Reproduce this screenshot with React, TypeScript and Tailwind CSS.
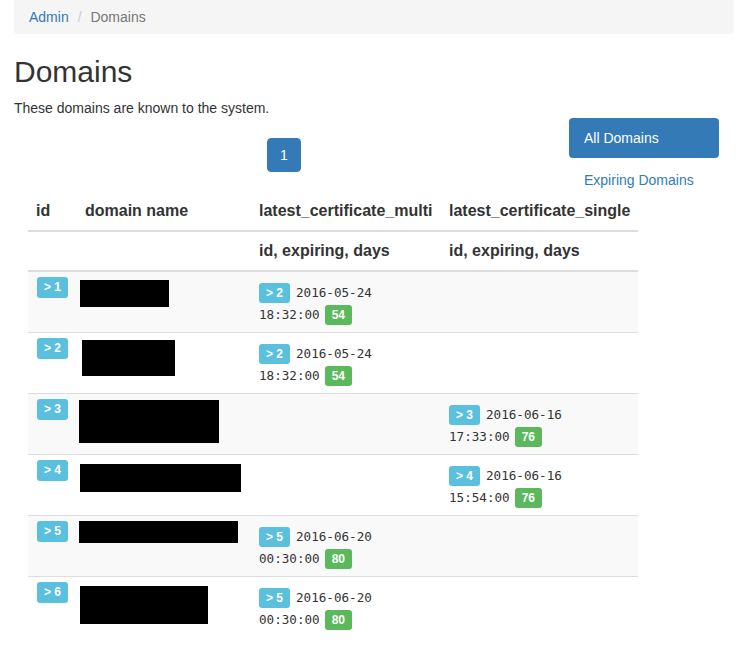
import React from "react";

type Cert = { id: number; date: string; time: string; days: number };
type Row = { id: number; box: string; multi: Cert | null; single: Cert | null };

const rows: Row[] = [
  { id: 1, box: "ml-[3px] mt-[8px] w-[89px] h-[27px]", multi: { id: 2, date: "2016-05-24", time: "18:32:00", days: 54 }, single: null },
  { id: 2, box: "ml-[5px] mt-[7px] w-[93px] h-[36px]", multi: { id: 2, date: "2016-05-24", time: "18:32:00", days: 54 }, single: null },
  { id: 3, box: "ml-[2px] mt-[6px] w-[140px] h-[43px]", multi: null, single: { id: 3, date: "2016-06-16", time: "17:33:00", days: 76 } },
  { id: 4, box: "ml-[3px] mt-[9px] w-[161px] h-[28px]", multi: null, single: { id: 4, date: "2016-06-16", time: "15:54:00", days: 76 } },
  { id: 5, box: "ml-[2px] mt-[5px] w-[159px] h-[22px]", multi: { id: 5, date: "2016-06-20", time: "00:30:00", days: 80 }, single: null },
  { id: 6, box: "ml-[3px] mt-[9px] w-[128px] h-[38px]", multi: { id: 5, date: "2016-06-20", time: "00:30:00", days: 80 }, single: null },
];

function CertCell({ cert, width }: { cert: Cert | null; width: string }) {
  return (
    <div className={`${width} shrink-0 px-[8px] pt-[11px]`}>
      {cert && (
        <>
          <div className="flex items-center h-[20px]">
            <span className="inline-flex items-center h-[20px] px-[7px] rounded-[3px] bg-[#5bc0de] text-white font-bold text-[12px] leading-none">
              {"> "}{cert.id}
            </span>
            <span className="ml-[6px] font-['DejaVu_Sans_Mono',monospace] text-[12.6px] text-[#333]">{cert.date}</span>
          </div>
          <div className="flex items-center h-[20px] mt-[2px]">
            <span className="font-['DejaVu_Sans_Mono',monospace] text-[12.6px] text-[#333]">{cert.time}</span>
            <span className="ml-[5px] inline-flex items-center h-[20px] px-[7px] rounded-[3px] bg-[#5cb85c] text-white font-bold text-[12px] leading-none">
              {cert.days}
            </span>
          </div>
        </>
      )}
    </div>
  );
}

export default function App() {
  return (
    <div className="w-[742px] min-h-[652px] bg-white font-['Liberation_Sans',Arial,sans-serif] text-[14px] leading-[20px] text-[#333] overflow-hidden">
      <div className="w-[720px] ml-[14px]">
        <div className="h-[34px] bg-[#f5f5f5] rounded-b-[4px] px-[15px] flex items-center">
          <span className="text-[#337ab7]">Admin</span>
          <span className="ml-[4px] px-[5px] text-[#ccc]">{"/\u00a0"}</span>
          <span className="text-[#777]">Domains</span>
        </div>
        <h1 className="mt-[21px] text-[30px] leading-[33px] font-normal">Domains</h1>
        <p className="mt-[10px]">These domains are known to the system.</p>
        <div className="flex">
          <div className="w-[555px] shrink-0">
            <div className="w-[540px] flex justify-center mt-[20px]">
              <span className="px-[12px] py-[6px] border border-[#337ab7] bg-[#337ab7] text-white rounded-[4px] leading-[20px]">1</span>
            </div>
            <div className="mt-[20px] ml-[14px] w-[610px]">
              <div className="flex border-b-2 border-[#ddd] font-bold text-[16px] leading-[22px]">
                <div className="w-[49px] shrink-0 p-[8px]">id</div>
                <div className="w-[174px] shrink-0 p-[8px]">domain name</div>
                <div className="w-[190px] shrink-0 p-[8px]">latest_certificate_multi</div>
                <div className="w-[197px] shrink-0 p-[8px]">latest_certificate_single</div>
              </div>
              <div className="flex border-b-2 border-[#ddd] font-bold text-[16px] leading-[22px]">
                <div className="w-[49px] shrink-0 p-[8px]"></div>
                <div className="w-[174px] shrink-0 p-[8px]"></div>
                <div className="w-[190px] shrink-0 p-[8px]">id, expiring, days</div>
                <div className="w-[197px] shrink-0 p-[8px]">id, expiring, days</div>
              </div>
              {rows.map((r, i) => (
                <div
                  key={r.id}
                  className={`flex h-[60px] box-content ${i > 0 ? "border-t border-[#ddd]" : ""} ${i % 2 === 0 ? "bg-[#f9f9f9]" : "bg-white"}`}
                >
                  <div className="w-[49px] shrink-0 pl-[9px] pt-[4px]">
                    <span className="inline-flex items-center h-[21px] px-[7px] rounded-[3px] bg-[#5bc0de] text-white font-bold text-[12px] leading-none">
                      {"> "}{r.id}
                    </span>
                  </div>
                  <div className="w-[174px] shrink-0">
                    <div className={`bg-black ${r.box}`}></div>
                  </div>
                  <CertCell cert={r.multi} width="w-[190px]" />
                  <CertCell cert={r.single} width="w-[197px]" />
                </div>
              ))}
            </div>
          </div>
          <div className="w-[150px] shrink-0">
            <div className="h-[40px] px-[15px] flex items-center rounded-[4px] bg-[#337ab7] text-white">All Domains</div>
            <div className="mt-[2px] h-[40px] px-[15px] flex items-center text-[#337ab7]">Expiring Domains</div>
          </div>
        </div>
      </div>
    </div>
  );
}
